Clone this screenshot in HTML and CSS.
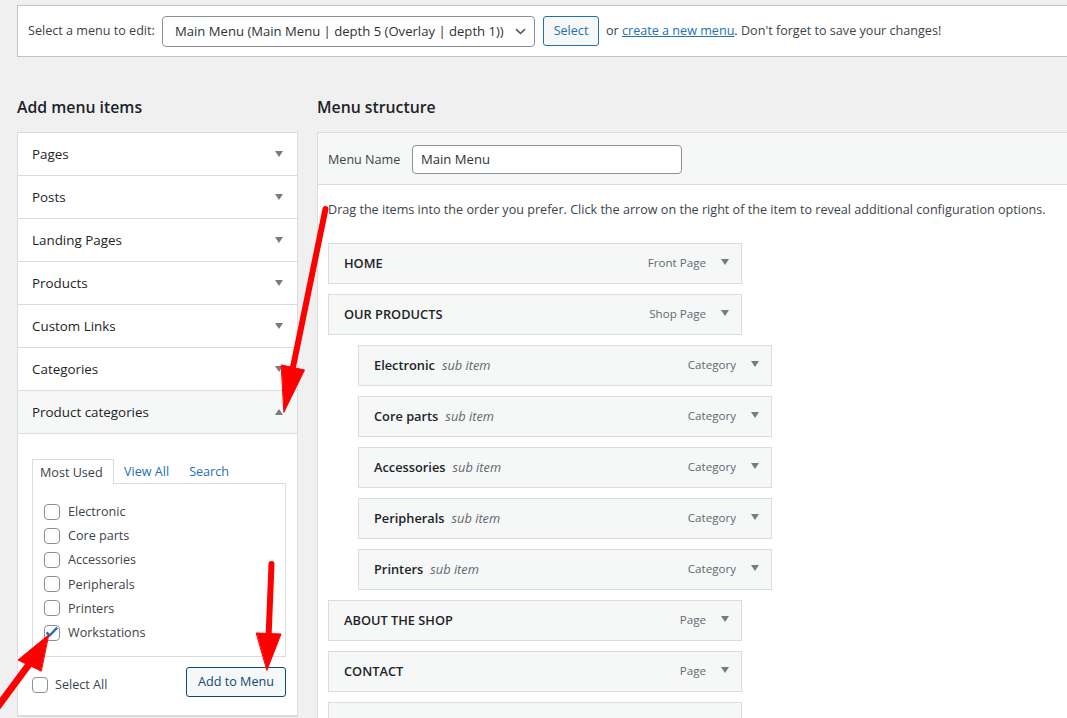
FILE: index.html
```html
<!DOCTYPE html>
<html lang="en">
<head>
<meta charset="utf-8">
<title>Menus</title>
<link rel="stylesheet" href="styles.css">
</head>
<body>
<div class="wrap">
  <div class="manage-menus">
    <label class="mm-label">Select a menu to edit:</label>
    <div class="select">
      <span>Main Menu (Main Menu | depth 5 (Overlay | depth 1))</span>
      <svg class="chev" width="11" height="7" viewBox="0 0 11 7"><path d="M1 1.2 L5.5 5.5 L10 1.2" fill="none" stroke="#50575e" stroke-width="1.6"/></svg>
    </div>
    <button class="btn btn-select">Select</button>
    <span class="mm-text">or <a href="#">create a new menu</a>. Don't forget to save your changes!</span>
  </div>

  <div class="columns">
    <div class="col-left">
      <h2>Add menu items</h2>
      <div class="accordion">
        <div class="acc-title">Pages<span class="tri down"></span></div>
        <div class="acc-title">Posts<span class="tri down"></span></div>
        <div class="acc-title">Landing Pages<span class="tri down"></span></div>
        <div class="acc-title">Products<span class="tri down"></span></div>
        <div class="acc-title">Custom Links<span class="tri down"></span></div>
        <div class="acc-title">Categories<span class="tri down"></span></div>
        <div class="acc-title open">Product categories<span class="tri up"></span></div>
        <div class="acc-content">
          <ul class="tabs">
            <li class="tab active">Most Used</li>
            <li class="tab">View All</li>
            <li class="tab">Search</li>
          </ul>
          <div class="tab-panel">
            <ul class="checklist">
              <li><span class="cb"></span>Electronic</li>
              <li><span class="cb"></span>Core parts</li>
              <li><span class="cb"></span>Accessories</li>
              <li><span class="cb"></span>Peripherals</li>
              <li><span class="cb"></span>Printers</li>
              <li><span class="cb checked"><svg width="16" height="16" viewBox="0 0 16 16"><path d="M2.6 7.4 L5.6 10.6 L13.2 2.6" fill="none" stroke="#2271b1" stroke-width="2.3"/></svg></span>Workstations</li>
            </ul>
          </div>
          <div class="button-controls">
            <label class="list-controls"><span class="cb"></span>Select All</label>
            <button class="btn btn-add">Add to Menu</button>
          </div>
        </div>
      </div>
    </div>

    <div class="col-right">
      <h2>Menu structure</h2>
      <div class="menu-panel">
        <div class="menu-header">
          <label class="mn-label">Menu Name</label>
          <div class="input">Main Menu</div>
        </div>
        <div class="menu-body">
          <p class="drag">Drag the items into the order you prefer. Click the arrow on the right of the item to reveal additional configuration options.</p>
          <ul class="menu">
            <li class="item"><span class="item-title">HOME</span><span class="item-type">Front Page</span><span class="item-arrow"></span></li>
            <li class="item"><span class="item-title">OUR PRODUCTS</span><span class="item-type">Shop Page</span><span class="item-arrow"></span></li>
            <li class="item sub"><span class="item-title">Electronic<em class="item-sub">sub item</em></span><span class="item-type">Category</span><span class="item-arrow"></span></li>
            <li class="item sub"><span class="item-title">Core parts<em class="item-sub">sub item</em></span><span class="item-type">Category</span><span class="item-arrow"></span></li>
            <li class="item sub"><span class="item-title">Accessories<em class="item-sub">sub item</em></span><span class="item-type">Category</span><span class="item-arrow"></span></li>
            <li class="item sub"><span class="item-title">Peripherals<em class="item-sub">sub item</em></span><span class="item-type">Category</span><span class="item-arrow"></span></li>
            <li class="item sub"><span class="item-title">Printers<em class="item-sub">sub item</em></span><span class="item-type">Category</span><span class="item-arrow"></span></li>
            <li class="item"><span class="item-title">ABOUT THE SHOP</span><span class="item-type">Page</span><span class="item-arrow"></span></li>
            <li class="item"><span class="item-title">CONTACT</span><span class="item-type">Page</span><span class="item-arrow"></span></li>
            <li class="item"></li>
          </ul>
        </div>
      </div>
    </div>
  </div>
</div>

<svg class="annot" width="1067" height="718" viewBox="0 0 1067 718">
  <g fill="#ff0000" stroke="#ff0000" stroke-linecap="round" stroke-linejoin="round">
    <line x1="325.5" y1="209" x2="292" y2="372" stroke-width="6"/>
    <polygon points="281.5,365 304.5,370 284,412" stroke-width="1"/>
    <line x1="271.5" y1="564" x2="268.5" y2="638" stroke-width="6"/>
    <polygon points="256.5,633 281,634 267,670" stroke-width="1"/>
    <line x1="-4" y1="709" x2="30" y2="663" stroke-width="7"/>
    <polygon points="48.5,635 18,660 41,671" stroke-width="1"/>
  </g>
</svg>
</body>
</html>
```

FILE: styles.css
```css
html, body {
  margin: 0;
  height: 718px;
  overflow: hidden;
}

body {
  position: relative;
  background: #f0f0f1;
  font-family: "Open Sans", "Segoe UI", "Noto Sans", sans-serif;
  font-size: 12.6px;
  line-height: 1.4;
  color: #3c434a;
}

a {
  color: #2271b1;
  text-decoration: underline;
}

ul {
  list-style: none;
  margin: 0;
  padding: 0;
}

.wrap {
  padding: 5px 0 0 17px;
}

/* top bar */
.manage-menus {
  box-sizing: border-box;
  width: 1080px;
  height: 52px;
  background: #fff;
  border: 1px solid #c3c4c7;
  border-right: none;
  display: flex;
  align-items: center;
  padding: 0 10px;
  white-space: nowrap;
}

.mm-label {
  flex: none;
  width: 126px;
  margin-right: 8px;
  white-space: nowrap;
}

.select {
  flex: none;
  box-sizing: border-box;
  width: 373px;
  height: 31px;
  border: 1px solid #8c8f94;
  border-radius: 4px;
  display: flex;
  align-items: center;
  justify-content: space-between;
  padding: 0 8px 0 12px;
  font-size: 13.1px;
  color: #2c3338;
  background: #fff;
}

.chev {
  display: block;
}

.btn {
  font-family: inherit;
  font-size: 12.6px;
  box-sizing: border-box;
  height: 30px;
  border: 1px solid #2271b1;
  border-radius: 3px;
  background: #f6f7f7;
  color: #2271b1;
  padding: 0 8px;
  line-height: 28px;
  flex: none;
}

.btn-select {
  width: 56px;
  margin-left: 8px;
}

.mm-text {
  margin-left: 7px;
}

/* columns */
.columns {
  display: flex;
  gap: 19px;
}

.col-left {
  flex: none;
  width: 281px;
}

.col-right {
  flex: none;
  width: 770px;
}

h2 {
  font-size: 15.8px;
  font-weight: 600;
  line-height: 22px;
  color: #1d2327;
  margin: 39px 0 14px;
}

/* accordion */
.accordion {
  background: #fff;
  border: 1px solid #dcdcde;
}

.acc-title {
  box-sizing: border-box;
  height: 43px;
  border-bottom: 1px solid #dcdcde;
  display: flex;
  align-items: center;
  justify-content: space-between;
  padding: 0 14px 0 14px;
  font-size: 13.4px;
  color: #1d2327;
}

.acc-title.open {
  background: #f6f7f7;
}

.tri {
  width: 0;
  height: 0;
  border-left: 4px solid transparent;
  border-right: 4px solid transparent;
}

.tri.down {
  border-top: 6px solid #787c82;
}

.tri.up {
  border-bottom: 6px solid #787c82;
}

.acc-content {
  padding: 25px 11px 18px 14px;
  border-bottom: 1px solid #dcdcde;
}

.tabs {
  display: flex;
  height: 24px;
}

.tab {
  box-sizing: border-box;
  height: 24px;
  padding: 2px 10px 0;
  line-height: 22px;
  color: #2271b1;
}

.tab.active {
  position: relative;
  z-index: 1;
  width: 82px;
  height: 25px;
  padding: 2px 0 0 7px;
  border: 1px solid #dcdcde;
  border-bottom: none;
  background: #fff;
  color: #3c434a;
}

.tab-panel {
  box-sizing: border-box;
  height: 174px;
  border: 1px solid #dcdcde;
  padding: 16px 0 0 11px;
}

.checklist li {
  height: 24.1px;
  display: flex;
  align-items: center;
  gap: 8px;
}

.cb {
  position: relative;
  flex: none;
  box-sizing: border-box;
  width: 16px;
  height: 16px;
  border: 1px solid #8c8f94;
  border-radius: 4px;
  background: #fff;
}

.cb svg {
  position: absolute;
  left: -1px;
  top: -1px;
}

.button-controls {
  display: flex;
  justify-content: space-between;
  align-items: center;
  margin-top: 10px;
  height: 30px;
}

.list-controls {
  display: flex;
  align-items: center;
  gap: 7px;
  margin-top: 6px;
}

.btn-add {
  width: 100px;
  border-color: #0a4b78;
  color: #0a4b78;
}

/* menu structure */
.menu-panel {
  background: #fff;
  border: 1px solid #dcdcde;
  border-right: none;
}

.menu-header {
  box-sizing: border-box;
  height: 52px;
  background: #f6f7f7;
  border-bottom: 1px solid #dcdcde;
  display: flex;
  align-items: center;
  padding: 1px 10px 0;
}

.mn-label {
  flex: none;
  width: 84px;
  padding-top: 1px;
}

.input {
  box-sizing: border-box;
  width: 270px;
  height: 29px;
  border: 1px solid #8c8f94;
  border-radius: 4px;
  background: #fff;
  padding: 1px 8px 0;
  display: flex;
  align-items: center;
  font-size: 13.1px;
  color: #2c3338;
}

.menu-body {
  padding: 0 10px;
}

.drag {
  margin: 15px 0 23px;
  line-height: 19.5px;
}

.item {
  box-sizing: border-box;
  width: 414px;
  height: 41px;
  margin-bottom: 10px;
  border: 1px solid #dcdcde;
  background: #f6f7f7;
  display: flex;
  align-items: center;
  padding: 1px 12px 0 15px;
}

.item.sub {
  margin-left: 30px;
}

.item-title {
  flex: 1;
  font-size: 12.8px;
  font-weight: 600;
  color: #1d2327;
}

.item-sub {
  font-weight: 400;
  font-style: italic;
  color: #646970;
  margin-left: 7px;
}

.item-type {
  font-size: 11.6px;
  color: #646970;
  margin-right: 15px;
}

.item-arrow {
  width: 0;
  height: 0;
  border-left: 4.5px solid transparent;
  border-right: 4.5px solid transparent;
  border-top: 6px solid #787c82;
  margin-top: -3px;
}

/* annotation arrows drawn over the screenshot */
.annot {
  position: absolute;
  left: 0;
  top: 0;
  pointer-events: none;
}
```
